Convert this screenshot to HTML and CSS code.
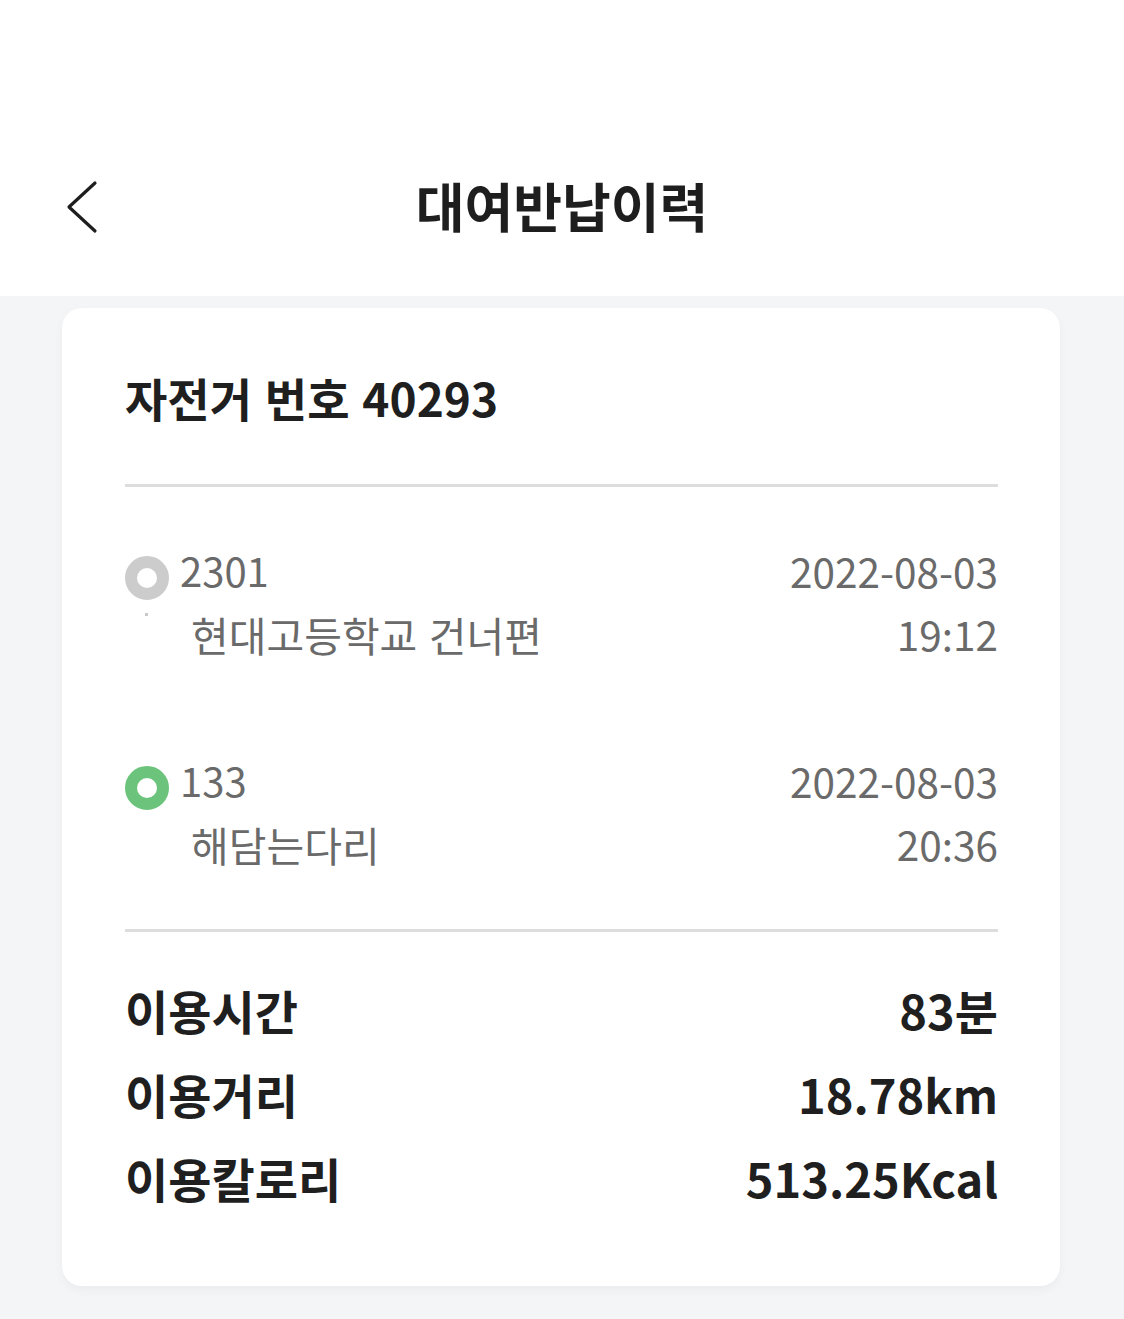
FILE: index.html
```html
<!DOCTYPE html>
<html lang="ko">
<head>
<meta charset="utf-8">
<title>대여반납이력</title>
<link rel="stylesheet" href="styles.css">
</head>
<body>
<header class="header">
  <div class="header-row">
    <button class="back" aria-label="뒤로">
      <svg width="34" height="54" viewBox="0 0 34 54" fill="none">
        <path d="M29 3 L3 27 L29 51" stroke="#1e1e1e" stroke-width="3.2" stroke-linecap="round" stroke-linejoin="round"/>
      </svg>
    </button>
    <h1 class="title">대여반납이력</h1>
    <span></span>
  </div>
</header>
<main class="main">
  <section class="card">
    <h2 class="bike">자전거 번호 40293</h2>
    <div class="stops">
      <div class="stop">
        <div class="stop-main">
          <div class="stop-line"><span class="ring ring-grey"></span><span class="num">2301</span></div>
          <div class="stop-name"><span class="tick-col"><span class="tick"></span></span><span>현대고등학교 건너편</span></div>
        </div>
        <div class="stop-time" lang="en"><div>2022-08-03</div><div>19:12</div></div>
      </div>
      <div class="stop">
        <div class="stop-main">
          <div class="stop-line"><span class="ring ring-green"></span><span class="num">133</span></div>
          <div class="stop-name"><span class="tick-col"></span><span>해담는다리</span></div>
        </div>
        <div class="stop-time" lang="en"><div>2022-08-03</div><div>20:36</div></div>
      </div>
    </div>
    <dl class="summary">
      <div class="sum-row"><dt>이용시간</dt><dd>83분</dd></div>
      <div class="sum-row"><dt>이용거리</dt><dd>18.78km</dd></div>
      <div class="sum-row"><dt>이용칼로리</dt><dd>513.25Kcal</dd></div>
    </dl>
  </section>
</main>
</body>
</html>
```

FILE: styles.css
```css
* { box-sizing: border-box; }
html, body {
  margin: 0;
  padding: 0;
}
body {
  width: 1124px;
  min-height: 1319px;
  background: #f4f5f7;
  font-family: "Noto Sans CJK KR", "Noto Sans", sans-serif;
  color: #1f1f1f;
}
.header {
  background: #ffffff;
  height: 296px;
  padding-top: 160px;
}
.header-row {
  display: grid;
  grid-template-columns: 1fr auto 1fr;
  align-items: center;
  height: 94px;
  padding: 0 66px;
}
.back {
  justify-self: start;
  background: none;
  border: 0;
  padding: 0;
  width: 34px;
  height: 54px;
  display: flex;
}
.title {
  margin: 0;
  font-size: 53px;
  font-weight: 700;
  line-height: 94px;
  color: #1e1e1e;
  margin-top: -4px;
}
.main {
  padding: 12px 64px 32px 62px;
}
.card {
  background: #ffffff;
  border-radius: 20px;
  box-shadow: 0 4px 10px rgba(0, 0, 0, 0.04);
  padding: 57px 62px 67px 63px;
}
.bike {
  margin: 0;
  font-size: 46px;
  font-weight: 700;
  line-height: 64px;
  color: #1f1f1f;
  padding-bottom: 55px;
  border-bottom: 3px solid #dddddd;
}
.stops {
  display: flex;
  flex-direction: column;
  gap: 84px;
  padding: 52px 0 54px;
  border-bottom: 3px solid #dddddd;
}
.stop {
  display: flex;
  justify-content: space-between;
  color: #6a6a6a;
}
.stop-line, .stop-name {
  display: flex;
  align-items: center;
  height: 63px;
}
.ring {
  width: 44px;
  height: 44px;
  border-radius: 50%;
  border: 12px solid #cccccc;
  background: #ffffff;
  margin-top: 14px;
  margin-right: 11px;
  flex: none;
}
.ring-green { border-color: #6cc47c; }
.num {
  font-size: 40px;
  line-height: 63px;
}
.stop-name {
  font-size: 41px;
}
.tick-col {
  width: 66px;
  flex: none;
  display: flex;
  justify-content: flex-start;
  align-self: flex-start;
  padding-top: 11px;
  padding-left: 20px;
}
.tick {
  width: 3px;
  height: 3px;
  background: #c9c9c9;
}
.stop-time {
  text-align: right;
  font-size: 40.5px;
  line-height: 63px;
}
.summary {
  margin: 0;
  padding-top: 35px;
}
.sum-row {
  display: flex;
  justify-content: space-between;
  align-items: center;
  height: 84px;
  font-size: 47px;
  font-weight: 700;
  color: #1f1f1f;
}
.sum-row dt, .sum-row dd {
  margin: 0;
}
```
